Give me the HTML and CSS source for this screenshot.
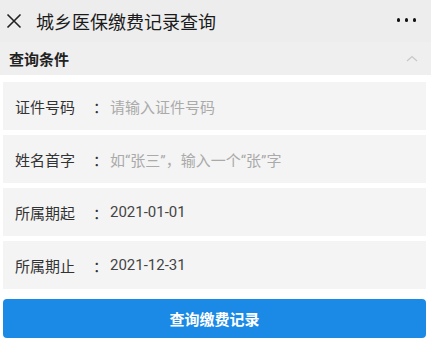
FILE: index.html
```html
<!DOCTYPE html>
<html lang="zh-CN">
<head>
    <meta charset="UTF-8">
    <meta name="viewport" content="width=device-width, initial-scale=1.0">
    <title>城乡医保缴费记录查询</title>
    <link rel="stylesheet" href="styles.css">
</head>
<body>
    <div class="topbar">
        <svg class="close-icon" width="16" height="16" viewBox="0 0 16 16">
            <path d="M1.5 1.5 L14.5 14.5 M14.5 1.5 L1.5 14.5" stroke="#222" stroke-width="1.6" fill="none"/>
        </svg>
        <span class="title">城乡医保缴费记录查询</span>
        <div class="more">
            <span class="dot"></span><span class="dot"></span><span class="dot"></span>
        </div>
    </div>

    <div class="section-head">
        <span>查询条件</span>
        <svg class="chevron" width="12" height="7" viewBox="0 0 12 7">
            <path d="M1 6 L6 1.5 L11 6" stroke="#c8c8c8" stroke-width="1.3" fill="none"/>
        </svg>
    </div>

    <div class="form">
        <div class="field">
            <span class="label">证件号码</span>
            <span class="colon">：</span>
            <span class="placeholder">请输入证件号码</span>
        </div>
        <div class="field">
            <span class="label">姓名首字</span>
            <span class="colon">：</span>
            <span class="placeholder">如<span class="q">“</span>张三<span class="q">”</span>，输入一个<span class="q">“</span>张<span class="q">”</span>字</span>
        </div>
        <div class="field">
            <span class="label">所属期起</span>
            <span class="colon">：</span>
            <span class="value">2021-01-01</span>
        </div>
        <div class="field">
            <span class="label">所属期止</span>
            <span class="colon">：</span>
            <span class="value">2021-12-31</span>
        </div>
        <button class="submit">查询缴费记录</button>
    </div>
</body>
</html>
```

FILE: styles.css
```css
body {
    margin: 0;
    background: #fff;
    font-family: "Noto Sans CJK SC", "Noto Sans", sans-serif;
    color: #333;
}
.topbar {
    height: 42px;
    background: #ededed;
    display: flex;
    align-items: center;
    padding: 0 15px 0 6px;
}
.close-icon {
    margin-top: -1px;
}
.title {
    margin-left: 14px;
    font-size: 18px;
    color: #1a1a1a;
    flex: 1;
}
.more {
    display: flex;
    gap: 4.5px;
    margin-top: -2px;
}
.dot {
    width: 3.5px;
    height: 3.5px;
    border-radius: 50%;
    background: #111;
}
.section-head {
    height: 33px;
    background: #efefef;
    display: flex;
    align-items: center;
    justify-content: space-between;
    padding: 0 13px 0 9px;
    font-size: 15px;
    font-weight: bold;
    color: #222;
}
.form {
    padding: 7px 5px 0 3px;
    display: flex;
    flex-direction: column;
    gap: 5px;
}
.field {
    height: 48px;
    background: #f4f4f4;
    display: flex;
    align-items: center;
    padding-left: 12px;
    font-size: 15px;
}
.label {
    width: 78px;
    color: #333;
}
.colon {
    width: 17px;
    color: #333;
}
.placeholder {
    color: #aaa;
}
.q {
    font-family: Roboto, sans-serif;
}
.value {
    color: #444;
    font-family: Roboto, "Noto Sans", sans-serif;
}
.submit {
    margin-top: 5px;
    height: 39px;
    border: none;
    border-radius: 4px;
    background: #1a8ae6;
    color: #fff;
    font-family: inherit;
    font-size: 15px;
    font-weight: bold;
}
```
